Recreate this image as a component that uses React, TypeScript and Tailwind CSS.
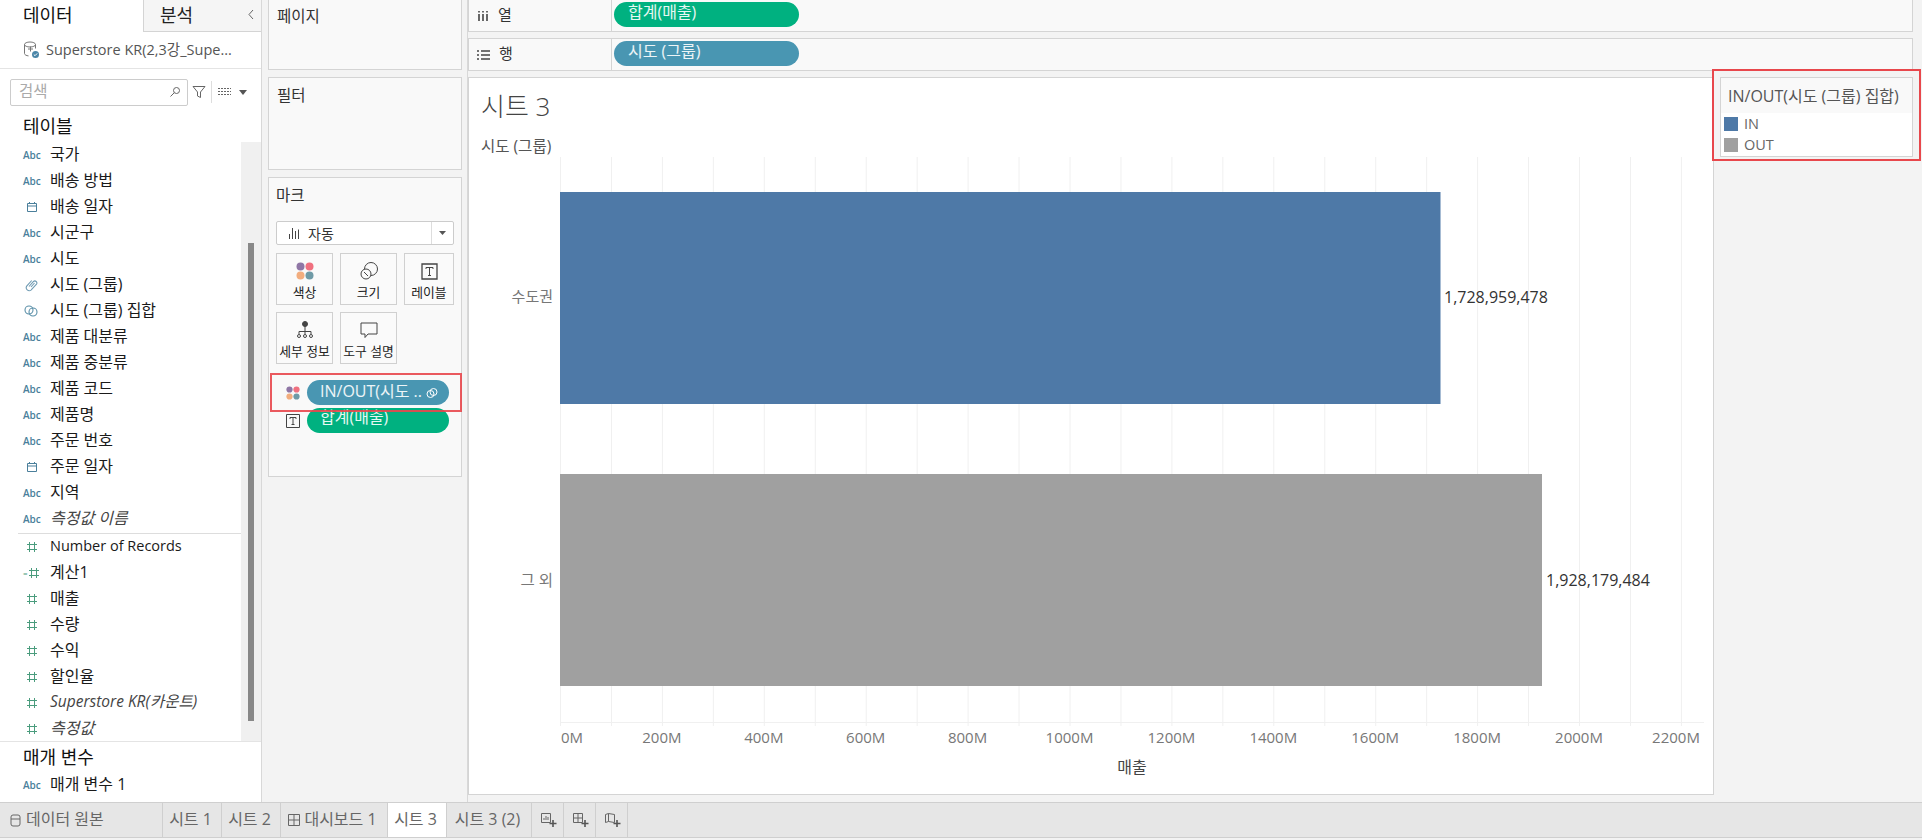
import React from "react";

type FieldKind = "abc" | "date" | "clip" | "set" | "num" | "calc";
type Field = { kind: FieldKind; name: string; italic?: boolean; size?: string };

const dims: Field[] = [
  { kind: "abc", name: "국가" },
  { kind: "abc", name: "배송 방법" },
  { kind: "date", name: "배송 일자" },
  { kind: "abc", name: "시군구" },
  { kind: "abc", name: "시도" },
  { kind: "clip", name: "시도 (그룹)" },
  { kind: "set", name: "시도 (그룹) 집합" },
  { kind: "abc", name: "제품 대분류" },
  { kind: "abc", name: "제품 중분류" },
  { kind: "abc", name: "제품 코드" },
  { kind: "abc", name: "제품명" },
  { kind: "abc", name: "주문 번호" },
  { kind: "date", name: "주문 일자" },
  { kind: "abc", name: "지역" },
  { kind: "abc", name: "측정값 이름", italic: true },
];

const measures: Field[] = [
  { kind: "num", name: "Number of Records", size: "text-[14.5px]" },
  { kind: "calc", name: "계산1" },
  { kind: "num", name: "매출" },
  { kind: "num", name: "수량" },
  { kind: "num", name: "수익" },
  { kind: "num", name: "할인율" },
  { kind: "num", name: "Superstore KR(카운트)", italic: true, size: "text-[15.5px]" },
  { kind: "num", name: "측정값", italic: true },
];

function Hash() {
  return (
    <svg width="12" height="12" viewBox="0 0 12 12" stroke="#4a9c7d" fill="none">
      <path d="M3.500 1v10M8.500 1v10M1 3.500h10M1 8.500h10" />
    </svg>
  );
}

function FieldIcon({ kind }: { kind: FieldKind }) {
  if (kind === "abc") return <span className="text-[10px] font-semibold text-[#4a7f9b] leading-none">Abc</span>;
  if (kind === "date")
    return (
      <svg className="ml-[3px]" width="12" height="12" viewBox="0 0 12 12" stroke="#4a7f9b" fill="none">
        <path d="M1.5 2.5h9v8h-9zM1.5 5h9M3.5 1v2M8.5 1v2" />
      </svg>
    );
  if (kind === "clip")
    return (
      <svg className="ml-[2px]" width="14" height="14" viewBox="0 0 14 14" stroke="#6f9bb3" strokeWidth="1.1" fill="none">
        <path d="M4 8.5l4.5-5a2 2 0 0 1 3 2.6l-5.5 6a3 3 0 0 1-4.3-4l5-5.6M6 9l3.5-4" />
      </svg>
    );
  if (kind === "set")
    return (
      <svg className="ml-[1px]" width="14" height="14" viewBox="0 0 14 14" stroke="#5a8fa8" strokeWidth="1.1" fill="none">
        <circle cx="5" cy="6" r="4" />
        <circle cx="9" cy="8" r="4" />
      </svg>
    );
  if (kind === "calc")
    return (
      <span className="flex items-center">
        <span className="text-[8px] leading-none text-[#4a9c7d]">=</span>
        <Hash />
      </span>
    );
  return <span className="ml-[3px] flex"><Hash /></span>;
}

function FieldRow({ kind, name, italic, size }: Field) {
  return (
    <div className="h-[26px] flex items-center">
      <div className="w-[50px] pl-[23px] flex justify-start items-center shrink-0">
        <FieldIcon kind={kind} />
      </div>
      <span className={(size ?? "text-[16px]") + " -mt-[3px] whitespace-nowrap " + (italic ? "italic text-[#444]" : "text-[#1a1a1a]")}>{name}</span>
    </div>
  );
}

function Dots({ size = 18 }: { size?: number }) {
  return (
    <svg width={size} height={size} viewBox="0 0 18 18">
      <circle cx="4.5" cy="4.5" r="4" fill="#8f76a5" />
      <circle cx="13.5" cy="4.5" r="4" fill="#f0707f" />
      <circle cx="4.5" cy="13.5" r="4" fill="#f2ad7e" />
      <circle cx="13.5" cy="13.5" r="4" fill="#6f9aa6" />
    </svg>
  );
}

function MarkButton({ label, className, children }: { label: string; className: string; children: React.ReactNode }) {
  return (
    <div className={"h-[52px] border border-[#d0d0d0] bg-[#fafafa] flex flex-col items-center pt-[7px] " + className}>
      <div className="h-[20px] flex items-center justify-center">{children}</div>
      <span className="text-[12.8px] leading-[16px] mt-[3px] text-[#222] whitespace-nowrap">{label}</span>
    </div>
  );
}

function Shelf({ icon, label, pill, color, className }: { icon: React.ReactNode; label: string; pill: string; color: string; className: string }) {
  return (
    <div className={"flex border border-[#d4d4d4] bg-[#f9f9f9] " + className}>
      <div className="w-[143px] border-r border-[#d4d4d4] flex items-center pl-[8px] gap-[9px] shrink-0">
        {icon}
        <span className="text-[15px] -mt-[2px] text-[#333]">{label}</span>
      </div>
      <div className={"ml-[2px] mt-[2px] w-[185px] h-[25px] rounded-full text-[16px] leading-[21px] pl-[14px] text-white/90 " + color}>{pill}</div>
    </div>
  );
}

function Chart() {
  const x0 = 560;
  const step = 50.95;
  const ticks = Array.from({ length: 23 }, (_, i) => i);
  return (
    <svg className="w-[1244px] h-[636px]" viewBox="469 157 1244 636">
      {ticks.map((i) => (
        <line key={i} x1={x0 + i * step + 0.5} x2={x0 + i * step + 0.5} y1="157" y2="726" stroke="#f0f0f0" />
      ))}
      <line x1={x0} x2="1704" y1="722.5" y2="722.5" stroke="#f0f0f0" />
      <rect x="560" y="192" width="880.5" height="212" fill="#4e79a7" />
      <rect x="560" y="474" width="982" height="212" fill="#a0a0a0" />
      <text x="553" y="302" textAnchor="end" fontSize="15" fill="#777">수도권</text>
      <text x="553" y="586" textAnchor="end" fontSize="15.500" fill="#777">그 외</text>
      <text x="1444" y="303" fontSize="16" fill="#333">1,728,959,478</text>
      <text x="1546" y="586" fontSize="16" fill="#333">1,928,179,484</text>
      {ticks
        .filter((i) => i % 2 === 0)
        .map((i) =>
          i === 0 ? (
            <text key={i} x="561" y="743" fontSize="15" fill="#777">0M</text>
          ) : (
            <text key={i} x={i === 22 ? 1676 : x0 + i * step} y="743" textAnchor="middle" fontSize="15" fill="#777">
              {i * 100}M
            </text>
          )
        )}
      <text x="1132" y="773" textAnchor="middle" fontSize="16" fill="#444">매출</text>
    </svg>
  );
}

const tabs = [
  { w: "w-[59px]", label: "시트 1" },
  { w: "w-[59px]", label: "시트 2" },
  { w: "w-[107px]", label: "대시보드 1", grid: true },
  { w: "w-[59px]", label: "시트 3", active: true },
  { w: "w-[85px]", label: "시트 3 (2)" },
];

function AddIcon({ kind }: { kind: "sheet" | "dash" | "story" }) {
  return (
    <svg width="18" height="18" viewBox="0 0 18 18" fill="none" stroke="#666">
      {kind === "sheet" && <path d="M2.5 2.5h9v9h-9zM5 9V7M7 9V5M9 9V6" />}
      {kind === "dash" && <path d="M2.5 2.5h9v9h-9zM7 2.5v9M2.5 7h9" />}
      {kind === "story" && <path d="M2.5 3.5l3-1 6 1v8l-6-1-3 1zM5.5 2.5v8" />}
      <path d="M14 9v7M10.5 12.5h7" stroke="#555" strokeWidth="1.6" />
    </svg>
  );
}

export default function App() {
  return (
    <div className="relative w-[1922px] h-[840px] overflow-hidden flex flex-col bg-[#f3f3f3] font-['Open_Sans','Noto_Sans_CJK_KR',sans-serif]">
      <div className="flex h-[802px]">
        {/* 데이터 패널 */}
        <div className="w-[262px] shrink-0 bg-white border-r border-[#d8d8d8] flex flex-col">
          <div className="flex h-[32px] shrink-0">
            <div className="w-[143px] pl-[23px] text-[18px] leading-[30px] text-[#111]">데이터</div>
            <div className="flex-1 pl-[16px] pr-[6px] flex justify-between bg-[#f5f5f5] border-l border-b border-[#d4d4d4] text-[18px] leading-[30px] text-[#222]">
              분석
              <svg width="8" height="30" viewBox="0 0 8 30" fill="none" stroke="#666"><path d="M6 10l-4 4.500 4 4.500" /></svg>
            </div>
          </div>
          <div className="h-[37px] shrink-0 border-b border-[#e4e4e4] flex items-center pl-[23px] gap-[6px]">
            <svg width="17" height="18" viewBox="0 0 17 18" fill="none" stroke="#777">
              <ellipse cx="7" cy="3.500" rx="5.500" ry="2.500" />
              <path d="M1.500 3.500v9c0 1.300 2 2.200 4 2.400M12.500 3.500v4M5 8h5M7.500 5.500v5" />
              <circle cx="12.500" cy="13.500" r="3.500" fill="#4a86a8" stroke="none" />
              <path d="M10.800 13.500l1.200 1.200 2.200-2.300" stroke="#fff" />
            </svg>
            <span className="text-[14.5px] text-[#555] whitespace-nowrap">Superstore KR(2,3강_Supe...</span>
          </div>
          <div className="flex items-center h-[36px] mt-[5px] shrink-0 pl-[10px]">
            <div className="w-[178px] h-[27px] border border-[#ccc] rounded-[2px] flex items-center justify-between pl-[8px] pr-[6px]">
              <span className="text-[15.5px] -mt-[1px] text-[#aaa]">검색</span>
              <svg width="12" height="12" viewBox="0 0 12 12" fill="none" stroke="#666"><circle cx="7.500" cy="4.500" r="3" /><path d="M5.300 6.700L1.500 10.500" /></svg>
            </div>
            <svg className="ml-[4px]" width="14" height="14" viewBox="0 0 14 14" fill="none" stroke="#666"><path d="M1 1.500h12L8.500 7v5.500l-3-1.500V7z" /></svg>
            <div className="w-px h-[22px] bg-[#ddd] ml-[5px]" />
            <svg className="ml-[6px]" width="13" height="10" viewBox="0 0 13 10" fill="none" stroke="#666" strokeDasharray="2 1"><path d="M0 1.500h13M0 4.500h13M0 7.500h13" /></svg>
            <svg className="ml-[8px]" width="8" height="5" viewBox="0 0 8 5" fill="#555"><path d="M0 0h8L4 5z" /></svg>
          </div>
          <div className="h-[32px] shrink-0 pl-[23px] text-[18px] leading-[32px] text-[#111]">테이블</div>
          <div className="flex h-[600px] shrink-0 border-b border-[#e4e4e4]">
            <div className="w-[241px] shrink-0">
              {dims.map((d) => (
                <FieldRow key={d.name} {...d} />
              ))}
              <div className="h-px mt-px ml-[18px] bg-[#ddd]" />
              {measures.map((d) => (
                <FieldRow key={d.name} {...d} />
              ))}
            </div>
            <div className="flex-1 bg-[#f0f0f0] pt-[101px] pl-[7px]">
              <div className="w-[6px] h-[478px] bg-[#888]" />
            </div>
          </div>
          <div className="pl-[23px] text-[18px] leading-[30px] text-[#111]">매개 변수</div>
          <FieldRow kind="abc" name="매개 변수 1" />
        </div>

        {/* 카드 영역 */}
        <div className="w-[206px] shrink-0 pl-[6px] pr-[5px] border-r border-[#d8d8d8] flex flex-col">
          <div className="h-[70px] border border-t-0 border-[#d4d4d4] bg-[#f9f9f9] pl-[8px] pt-[5px] text-[15.5px] text-[#333]">페이지</div>
          <div className="h-[93px] mt-[7px] border border-[#d4d4d4] bg-[#f9f9f9] pl-[8px] pt-[6px] text-[15.5px] text-[#333]">필터</div>
          <div className="h-[300px] mt-[7px] border border-[#d4d4d4] bg-[#f9f9f9] px-[7px] relative">
            <div className="text-[15.5px] leading-[20px] mt-[7px] text-[#333]">마크</div>
            <div className="h-[24px] mt-[16px] w-[178px] border border-[#ccc] rounded-[2px] bg-white flex items-center">
              <div className="flex-1 flex items-center pl-[11px] gap-[8px] text-[14px] text-[#333]">
                <svg width="12" height="12" viewBox="0 0 12 12" stroke="#444" fill="none"><path d="M1.500 12V7M4.500 12V1M7.500 12V4M10.500 12V2.500" /></svg>
                자동
              </div>
              <div className="w-[22px] h-full border-l border-[#ddd] flex items-center justify-center">
                <svg width="7" height="4" viewBox="0 0 7 4" fill="#555"><path d="M0 0h7L3.500 4z" /></svg>
              </div>
            </div>
            <div className="flex gap-[7px] mt-[8px]">
              <MarkButton label="색상" className="w-[57px]"><Dots /></MarkButton>
              <MarkButton label="크기" className="w-[57px]">
                <svg width="20" height="20" viewBox="0 0 20 20" fill="none" stroke="#444"><circle cx="12" cy="8" r="6.500" /><circle cx="7" cy="13" r="5" fill="#fafafa" /><path d="M5 11l4 4" /></svg>
              </MarkButton>
              <MarkButton label="레이블" className="w-[50px]">
                <svg width="17" height="17" viewBox="0 0 17 17" fill="none" stroke="#444"><path d="M1 1h15v15H1z" strokeWidth="1.300" /><path d="M5 6V4.500h7V6M8.500 4.500V12.500M7 12.500h3" /></svg>
              </MarkButton>
            </div>
            <div className="flex gap-[7px] mt-[7px]">
              <MarkButton label="세부 정보" className="w-[57px]">
                <svg width="18" height="18" viewBox="0 0 18 18" fill="none" stroke="#444"><circle cx="9" cy="3" r="2.500" fill="#444" /><path d="M9 5v5M3 13v-2.500h12V13M9 10.500V13" /><circle cx="3" cy="15" r="1.500" /><circle cx="9" cy="15" r="1.500" /><circle cx="15" cy="15" r="1.500" /></svg>
              </MarkButton>
              <MarkButton label="도구 설명" className="w-[57px]">
                <svg width="18" height="17" viewBox="0 0 18 17" fill="none" stroke="#444"><path d="M1 1h16v11H8l-3 3.500V12H1z" /></svg>
              </MarkButton>
            </div>
            <div className="flex items-center mt-[16px] h-[25px]">
              <div className="w-[31px] pl-[10px] shrink-0"><Dots size={14} /></div>
              <div className="w-[142px] h-[25px] rounded-full bg-[#4996b2] text-[16px] leading-[21px] pl-[13px] pr-[11px] text-white/90 flex justify-between items-center">
                <span className="whitespace-nowrap -mt-[2px]">IN/OUT(시도 ..</span>
                <svg className="shrink-0" width="12" height="12" viewBox="0 0 12 12" fill="none" stroke="#fff"><circle cx="4.500" cy="7" r="3.500" /><circle cx="7.500" cy="5" r="3.500" /></svg>
              </div>
            </div>
            <div className="flex items-center mt-[3px] h-[25px]">
              <div className="w-[31px] pl-[10px] shrink-0">
                <svg width="14" height="14" viewBox="0 0 14 14" fill="none" stroke="#444"><path d="M.5.500h13v13H.5z" /><path d="M4 5V3.500h6V5M7 3.500v7M5.500 10.500h3" /></svg>
              </div>
              <div className="w-[142px] h-[25px] rounded-full bg-[#00b180] text-[16px] leading-[19px] pl-[13px] text-white/90">합계(매출)</div>
            </div>
            {/* 강조 표시 */}
            <div className="absolute left-[1px] top-[195px] w-[192px] h-[39px] border-2 border-[#e8474c]/90 pointer-events-none" />
          </div>
        </div>

        {/* 뷰 영역 */}
        <div className="flex-1 flex flex-col min-w-0">
          <Shelf
            className="w-[1445px] h-[32px] border-t-0"
            icon={<svg width="12" height="12" viewBox="0 0 12 12" stroke="#444" strokeWidth="1.600" fill="none"><path d="M2 4v7M6 4v7M10 4v7M2 1v1.500M6 1v1.500M10 1v1.500" /></svg>}
            label="열"
            pill="합계(매출)"
            color="bg-[#00b180]"
          />
          <Shelf
            className="w-[1445px] h-[33px] mt-[6px]"
            icon={<svg width="13" height="12" viewBox="0 0 13 12" stroke="#444" strokeWidth="1.600" fill="none"><path d="M4 2h9M4 6h9M4 10h9M0 2h2M0 6h2M0 10h2" /></svg>}
            label="행"
            pill="시도 (그룹)"
            color="bg-[#4996b2]"
          />
          <div className="flex mt-[6px]">
            <div className="w-[1246px] h-[718px] border border-[#d4d4d4] bg-white shrink-0">
              <div className="h-[79px] pl-[12px]">
                <div className="text-[26px] font-light leading-[32px] pt-[12px] text-[#444]">시트 3</div>
                <div className="text-[15.5px] leading-[18px] mt-[15px] text-[#555] whitespace-nowrap">시도 (그룹)</div>
              </div>
              <Chart />
            </div>
            <div className="w-[193px] h-[80px] ml-[6px] border border-[#d4d4d4] bg-white shrink-0">
              <div className="h-[35px] bg-[#f9f9f9] pl-[7px] text-[16px] leading-[36px] text-[#555] whitespace-nowrap">IN/OUT(시도 (그룹) 집합)</div>
              <div className="flex items-center h-[21px] pl-[3px] gap-[6px] text-[14.5px] text-[#666]">
                <div className="w-[14px] h-[14px] bg-[#4e79a7]" />IN
              </div>
              <div className="flex items-center h-[21px] pl-[3px] gap-[6px] text-[14.5px] text-[#666]">
                <div className="w-[14px] h-[14px] bg-[#a0a0a0]" />OUT
              </div>
            </div>
          </div>
        </div>
      </div>

      {/* 시트 탭 */}
      <div className="h-[36px] shrink-0 bg-[#e6e6e6] border-t border-b border-[#cfcfcf] flex text-[16px] text-[#666]">
        <div className="w-[163px] flex items-center pl-[10px] gap-[5px] border-r border-[#cfcfcf]">
          <svg width="11" height="13" viewBox="0 0 11 13" fill="none" stroke="#666"><rect x="1" y="1" width="9" height="11" rx="2" /><path d="M1 5h9" /></svg>
          <span className="-mt-[2px]">데이터 원본</span>
        </div>
        {tabs.map((t) => (
          <div key={t.label} className={t.w + " flex items-center justify-center gap-[4px] pr-[3px] border-r border-[#cfcfcf] whitespace-nowrap " + (t.active ? "bg-white" : "")}>
            {t.grid && (
              <svg width="12" height="12" viewBox="0 0 12 12" fill="none" stroke="#666"><path d="M.5.500h11v11H.5zM6 .500v11M.5 6h11" /></svg>
            )}
            <span className="-mt-[2px]">{t.label}</span>
          </div>
        ))}
        <div className="w-[32px] flex items-center justify-center border-r border-[#cfcfcf]"><AddIcon kind="sheet" /></div>
        <div className="w-[32px] flex items-center justify-center border-r border-[#cfcfcf]"><AddIcon kind="dash" /></div>
        <div className="w-[32px] flex items-center justify-center border-r border-[#cfcfcf]"><AddIcon kind="story" /></div>
      </div>
      <div className="h-[2px] bg-[#f3f3f3]" />

      {/* 범례 강조 표시 */}
      <div className="absolute left-[1712px] top-[69px] w-[209px] h-[92px] border-2 border-[#e8474c] pointer-events-none" />
    </div>
  );
}
